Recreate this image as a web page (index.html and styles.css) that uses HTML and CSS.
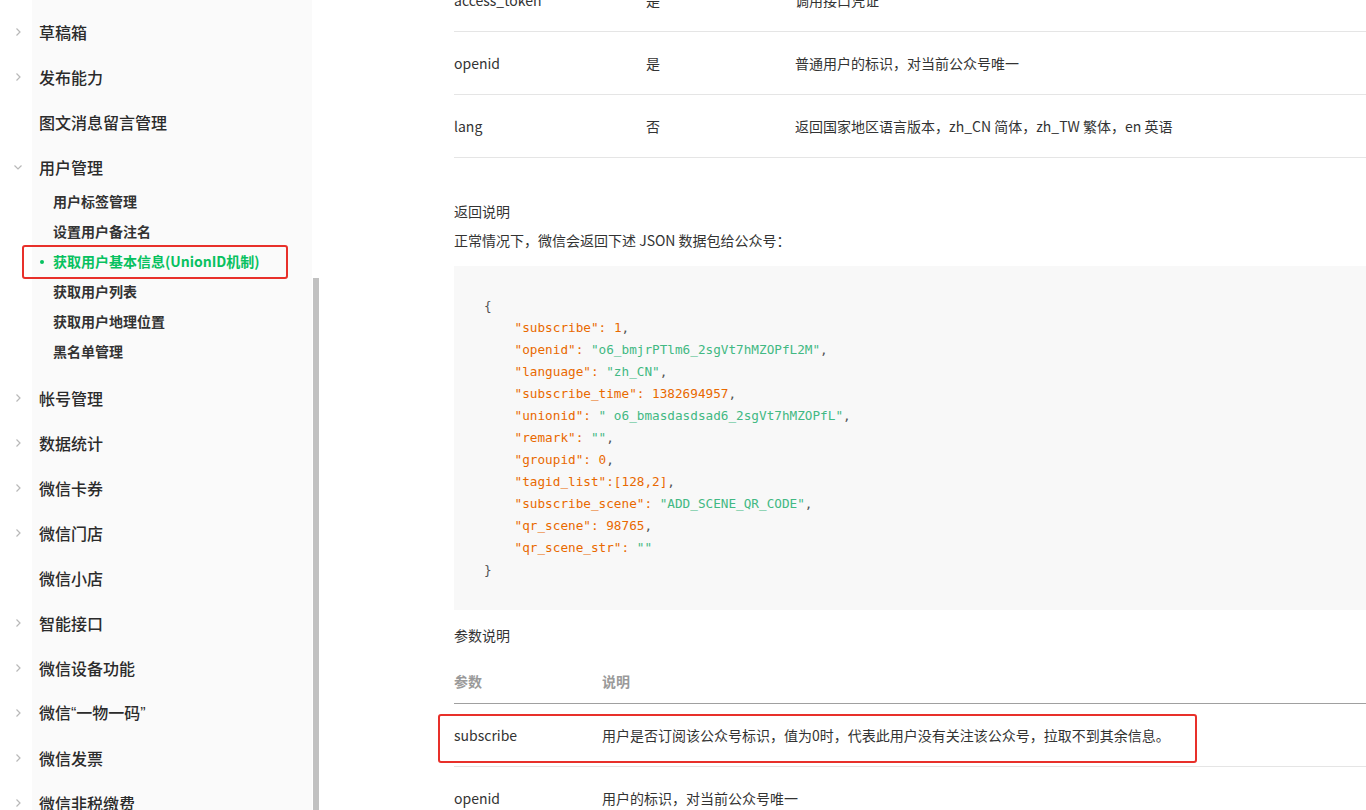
FILE: index.html
```html
<!DOCTYPE html>
<html lang="zh-CN">
<head>
<meta charset="utf-8">
<title>获取用户基本信息(UnionID机制)</title>
<link rel="stylesheet" href="styles.css">
</head>
<body>
<div class="page">
  <aside class="sidebar">
    <nav class="nav">
      <div class="item"><span class="chev"><svg viewBox="0 0 10 10"><path d="M3.5 1.5 L7 5 L3.5 8.5"/></svg></span><span class="label">草稿箱</span></div>
      <div class="item"><span class="chev"><svg viewBox="0 0 10 10"><path d="M3.5 1.5 L7 5 L3.5 8.5"/></svg></span><span class="label">发布能力</span></div>
      <div class="item"><span class="chev"></span><span class="label">图文消息留言管理</span></div>
      <div class="item"><span class="chev"><svg viewBox="0 0 10 10"><path d="M1.5 3.5 L5 7 L8.5 3.5"/></svg></span><span class="label">用户管理</span></div>
      <ul class="sub">
        <li>用户标签管理</li>
        <li>设置用户备注名</li>
        <li class="active"><span class="dot"></span>获取用户基本信息(UnionID机制)</li>
        <li>获取用户列表</li>
        <li>获取用户地理位置</li>
        <li>黑名单管理</li>
      </ul>
      <div class="item"><span class="chev"><svg viewBox="0 0 10 10"><path d="M3.5 1.5 L7 5 L3.5 8.5"/></svg></span><span class="label">帐号管理</span></div>
      <div class="item"><span class="chev"><svg viewBox="0 0 10 10"><path d="M3.5 1.5 L7 5 L3.5 8.5"/></svg></span><span class="label">数据统计</span></div>
      <div class="item"><span class="chev"><svg viewBox="0 0 10 10"><path d="M3.5 1.5 L7 5 L3.5 8.5"/></svg></span><span class="label">微信卡券</span></div>
      <div class="item"><span class="chev"><svg viewBox="0 0 10 10"><path d="M3.5 1.5 L7 5 L3.5 8.5"/></svg></span><span class="label">微信门店</span></div>
      <div class="item"><span class="chev"></span><span class="label">微信小店</span></div>
      <div class="item"><span class="chev"><svg viewBox="0 0 10 10"><path d="M3.5 1.5 L7 5 L3.5 8.5"/></svg></span><span class="label">智能接口</span></div>
      <div class="item"><span class="chev"><svg viewBox="0 0 10 10"><path d="M3.5 1.5 L7 5 L3.5 8.5"/></svg></span><span class="label">微信设备功能</span></div>
      <div class="item"><span class="chev"><svg viewBox="0 0 10 10"><path d="M3.5 1.5 L7 5 L3.5 8.5"/></svg></span><span class="label">微信<span class="q">“</span>一物一码<span class="q">”</span></span></div>
      <div class="item"><span class="chev"><svg viewBox="0 0 10 10"><path d="M3.5 1.5 L7 5 L3.5 8.5"/></svg></span><span class="label">微信发票</span></div>
      <div class="item"><span class="chev"><svg viewBox="0 0 10 10"><path d="M3.5 1.5 L7 5 L3.5 8.5"/></svg></span><span class="label">微信非税缴费</span></div>
    </nav>
    <div class="scroll-track"><div class="scroll-thumb"></div></div>
  </aside>

  <main class="main">
    <table class="params">
      <tr><td class="c1">access_token</td><td class="c2">是</td><td>调用接口凭证</td></tr>
      <tr><td class="c1">openid</td><td class="c2">是</td><td>普通用户的标识，对当前公众号唯一</td></tr>
      <tr><td class="c1">lang</td><td class="c2">否</td><td>返回国家地区语言版本，zh_CN 简体，zh_TW 繁体，en 英语</td></tr>
    </table>

    <p class="title-return">返回说明</p>
    <p class="desc">正常情况下，微信会返回下述 JSON 数据包给公众号：</p>

<pre class="code"><span class="p">{</span>
    <span class="k">"subscribe":</span> <span class="n">1</span><span class="p">,</span>
    <span class="k">"openid":</span> <span class="s">"o6_bmjrPTlm6_2sgVt7hMZOPfL2M"</span><span class="p">,</span>
    <span class="k">"language":</span> <span class="s">"zh_CN"</span><span class="p">,</span>
    <span class="k">"subscribe_time":</span> <span class="n">1382694957</span><span class="p">,</span>
    <span class="k">"unionid":</span> <span class="s">" o6_bmasdasdsad6_2sgVt7hMZOPfL"</span><span class="p">,</span>
    <span class="k">"remark":</span> <span class="s">""</span><span class="p">,</span>
    <span class="k">"groupid":</span> <span class="n">0</span><span class="p">,</span>
    <span class="k">"tagid_list":[128,2]</span><span class="p">,</span>
    <span class="k">"subscribe_scene":</span> <span class="s">"ADD_SCENE_QR_CODE"</span><span class="p">,</span>
    <span class="k">"qr_scene":</span> <span class="n">98765</span><span class="p">,</span>
    <span class="k">"qr_scene_str":</span> <span class="s">""</span>
<span class="p">}</span></pre>

    <p class="title-params">参数说明</p>
    <table class="desc-table">
      <thead><tr><th class="d1">参数</th><th>说明</th></tr></thead>
      <tbody>
        <tr class="mark"><td class="d1">subscribe</td><td>用户是否订阅该公众号标识，值为0时，代表此用户没有关注该公众号，拉取不到其余信息。</td></tr>
        <tr><td class="d1">openid</td><td>用户的标识，对当前公众号唯一</td></tr>
      </tbody>
    </table>
  </main>
</div>
</body>
</html>
```

FILE: styles.css
```css
html, body {
  margin: 0;
  padding: 0;
  background: #fff;
  overflow: hidden;
  height: 810px;
}

body {
  font-family: "Noto Sans CJK SC", "Open Sans", sans-serif;
  color: #333;
}

.page {
  display: flex;
  align-items: flex-start;
  height: 810px;
  overflow: hidden;
}

/* ---------- sidebar ---------- */
.sidebar {
  display: flex;
  width: 320px;
  flex: none;
  height: 810px;
}

.nav {
  width: 312px;
  flex: none;
  padding-top: 9.5px;
  background: linear-gradient(to right, #fff 32px, #fafafa 32px);
  height: 810px;
  box-sizing: border-box;
}

.item {
  display: flex;
  align-items: center;
  height: 45px;
}

.chev {
  width: 39px;
  flex: none;
  display: flex;
  justify-content: flex-start;
  padding-left: 13px;
  box-sizing: border-box;
}

.chev svg {
  width: 10px;
  height: 10px;
  fill: none;
  stroke: #b8b8b8;
  stroke-width: 1.2;
}

.label {
  font-size: 16px;
  line-height: 22px;
  color: #2b2b2b;
  font-weight: 500;
}

.label .q {
  font-family: "Liberation Sans", sans-serif;
  font-weight: 400;
}

.sub {
  list-style: none;
  margin: -4px 0 0 0;
  padding: 0 0 10px 0;
}

.sub li {
  position: relative;
  height: 30px;
  line-height: 30px;
  padding-left: 53px;
  font-size: 14px;
  font-weight: 700;
  color: #333;
}

.sub li.active {
  color: #07c160;
}

.sub li.active::after {
  content: "";
  position: absolute;
  left: 22px;
  top: -1px;
  width: 266px;
  height: 34px;
  border: 2.5px solid #e8302a;
  border-radius: 3px;
  box-sizing: border-box;
}

.dot {
  position: absolute;
  left: 40px;
  top: 14px;
  width: 4px;
  height: 4px;
  border-radius: 50%;
  background: #07c160;
}

.scroll-track {
  width: 8px;
  flex: none;
  padding-top: 278px;
  padding-left: 1px;
  box-sizing: border-box;
  height: 810px;
}

.scroll-thumb {
  width: 6px;
  height: 540px;
  background: #c1c1c1;
}

/* ---------- main ---------- */
.main {
  flex: 1;
  padding-left: 134px;
  margin-top: -31px;
  min-width: 0;
}

.params {
  width: 100%;
  border-collapse: collapse;
  font-size: 14px;
}

.params td {
  height: 61px;
  padding: 0 0 1px 0;
  border-bottom: 1px solid #e5e5e5;
  vertical-align: middle;
  line-height: 20px;
  box-sizing: content-box;
}

.params .c1 { width: 192px; }
.params .c2 { width: 149px; }

.title-return {
  margin: 43px 0 0 0;
  font-size: 14px;
  line-height: 20px;
}

.desc {
  margin: 9px 0 0 0;
  font-size: 14px;
  line-height: 20px;
}

.code {
  margin: 16px 0 0 0;
  background: #f8f8f8;
  padding: 29px 30px 29px 30px;
  font-family: "DejaVu Sans Mono", "Liberation Mono", monospace;
  font-size: 12.7px;
  line-height: 22px;
  color: #525252;
  width: 1000px;
}

.code .k { color: #e96900; }
.code .n { color: #e96900; }
.code .s { color: #42b983; }
.code .p { color: #525252; }

.title-params {
  margin: 15px 0 0 0;
  font-size: 14px;
  line-height: 20px;
}

.desc-table {
  width: 100%;
  margin-top: 15px;
  border-collapse: collapse;
  font-size: 14px;
}

.desc-table th {
  text-align: left;
  font-weight: 700;
  color: #9a9a9a;
  height: 41px;
  padding: 0 0 2px 0;
  vertical-align: middle;
  border-bottom: 1px solid #a0a0a0;
  line-height: 20px;
}

.desc-table td {
  height: 61px;
  padding: 0 0 1px 0;
  border-bottom: 1px solid #e5e5e5;
  vertical-align: middle;
  line-height: 20px;
  box-sizing: content-box;
}

.desc-table .d1 { width: 148px; }

.desc-table tr.mark td:first-child {
  position: relative;
}

.desc-table tr.mark td:first-child::after {
  content: "";
  position: absolute;
  left: -16px;
  top: 10px;
  width: 759px;
  height: 49px;
  border: 2.5px solid #e8302a;
  border-radius: 3px;
  box-sizing: border-box;
  pointer-events: none;
}
```
